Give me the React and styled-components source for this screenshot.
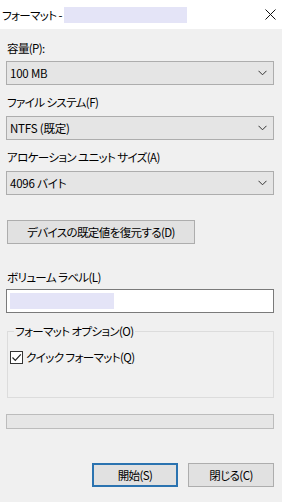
import React from "react";
import styled, { createGlobalStyle } from "styled-components";

const Global = createGlobalStyle`
  html, body { margin: 0; padding: 0; background: #f0f0f0; }
  body {
    font-family: "Noto Sans CJK JP", "Noto Sans", sans-serif;
    font-size: 11.5px;
    color: #000;
    font-feature-settings: "palt";
    letter-spacing: -0.6px;
  }
  * { box-sizing: border-box; }
`;

const Window = styled.div`
  width: 282px;
  height: 502px;
  background: #f0f0f0;
  display: flex;
  flex-direction: column;
  overflow: hidden;
`;

const TitleBar = styled.div`
  height: 29px;
  background: #fff;
  display: flex;
  align-items: center;
  padding: 0 0 0 2px;
`;

const TitleText = styled.span`
  line-height: 16px;
`;

const Blur = styled.span`
  display: inline-block;
  width: ${p => p.$w}px;
  height: ${p => p.$h}px;
  background: #e4e4f7;
  margin-left: ${p => p.$ml || 0}px;
`;

const CloseBtn = styled.div`
  margin-left: auto;
  width: 24px;
  height: 29px;
  display: flex;
  align-items: center;
  justify-content: center;
`;

const Body = styled.div`
  display: flex;
  flex-direction: column;
  padding: 0 8px 0 6px;
`;

const Label = styled.div`
  line-height: 16px;
  height: 16px;
  padding-left: 1px;
  margin-top: ${p => p.$mt}px;
  margin-bottom: ${p => p.$mb ?? 5}px;
  white-space: nowrap;
`;

const Select = styled.div`
  height: 24px;
  border: 1px solid #adadad;
  background: #e5e5e5;
  display: flex;
  align-items: center;
  padding: 0 6px 0 3px;
  line-height: 16px;
  letter-spacing: -0.2px;
`;

const Chevron = styled.svg`
  margin-left: auto;
`;

const Button = styled.div`
  height: 24px;
  width: ${p => p.$w}px;
  border: ${p => (p.$default ? "2px solid #2b73b0" : "1px solid #adadad")};
  background: #e1e1e1;
  display: flex;
  align-items: center;
  justify-content: center;
  line-height: 16px;
  white-space: nowrap;
  margin-top: ${p => p.$mt || 0}px;
  margin-left: ${p => p.$ml || 0}px;
`;

const Input = styled.div`
  height: 24px;
  border: 1px solid #7a7a7a;
  background: #fff;
  display: flex;
  align-items: center;
  padding-left: 3px;
`;

const Group = styled.fieldset`
  margin: 10px 0 0 1px;
  padding: 10px 0 0 2px;
  height: 75px;
  border: 1px solid #dcdcdc;
  border-radius: 0;
  min-width: 0;
`;

const Legend = styled.legend`
  padding: 0 1px;
  margin-left: 4px;
  line-height: 16px;
`;

const CheckRow = styled.label`
  display: flex;
  align-items: center;
  gap: 3px;
  line-height: 16px;
`;

const Box = styled.span`
  width: 13px;
  height: 13px;
  border: 1px solid #333;
  background: #fff;
  display: flex;
  align-items: center;
  justify-content: center;
`;

const Progress = styled.div`
  height: 15px;
  margin-top: 16px;
  border: 1px solid #bcbcbc;
  background: #e6e6e6;
`;

const Footer = styled.div`
  display: flex;
  justify-content: flex-end;
  gap: 10px;
  margin-top: 34px;
`;

const ChevronIcon = () => (
  <Chevron width="9" height="6" viewBox="0 0 9 6">
    <path d="M0.5 0.8 L4.5 4.8 L8.5 0.8" fill="none" stroke="#333" strokeWidth="1" />
  </Chevron>
);

export default function App() {
  return (
    <Window>
      <Global />
      <TitleBar>
        <TitleText>フォーマット -</TitleText>
        <Blur $w={123} $h={16} $ml={2} />
        <CloseBtn>
          <svg width="11" height="11" viewBox="0 0 11 11">
            <path d="M0.5 0.5 L10.5 10.5 M10.5 0.5 L0.5 10.5" stroke="#111" strokeWidth="1" />
          </svg>
        </CloseBtn>
      </TitleBar>
      <Body>
        <Label $mt={11}>容量(P):</Label>
        <Select>100 MB<ChevronIcon /></Select>
        <Label $mt={9} $mb={6}>ファイル システム(F)</Label>
        <Select>NTFS (既定)<ChevronIcon /></Select>
        <Label $mt={9} $mb={6}>アロケーション ユニット サイズ(A)</Label>
        <Select>4096 バイト<ChevronIcon /></Select>
        <Button $w={188} $mt={25} $ml={1}>デバイスの既定値を復元する(D)</Button>
        <Label $mt={25} $mb={4}>ボリューム ラベル(L)</Label>
        <Input><Blur $w={104} $h={16} /></Input>
        <Group>
          <Legend>フォーマット オプション(O)</Legend>
          <CheckRow>
            <Box>
              <svg width="11" height="11" viewBox="0 0 11 11">
                <path d="M1.5 5.5 L4.3 8.3 L9.8 2.3" fill="none" stroke="#222" strokeWidth="1.2" />
              </svg>
            </Box>
            クイック フォーマット(Q)
          </CheckRow>
        </Group>
        <Progress />
        <Footer>
          <Button $w={86} $default>開始(S)</Button>
          <Button $w={86}>閉じる(C)</Button>
        </Footer>
      </Body>
    </Window>
  );
}
